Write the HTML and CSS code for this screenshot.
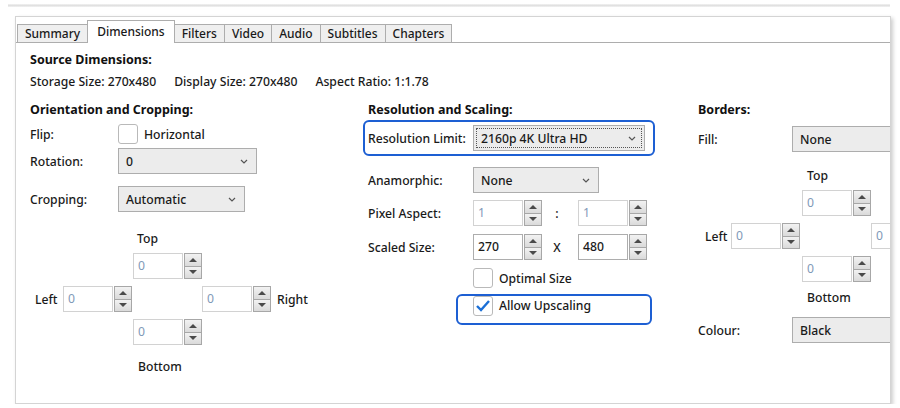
FILE: index.html
```html
<!DOCTYPE html>
<html lang="en">
<head>
    <meta charset="UTF-8">
    <title>Dimensions</title>
    <link rel="stylesheet" href="styles.css">
</head>
<body>
    <div class="topline"></div>

    <div class="window">
        <div class="tabs">
            <div class="tab">Summary</div>
            <div class="tab active">Dimensions</div>
            <div class="tab">Filters</div>
            <div class="tab">Video</div>
            <div class="tab">Audio</div>
            <div class="tab">Subtitles</div>
            <div class="tab">Chapters</div>
        </div>

        <div class="page">
            <h2>Source Dimensions:</h2>
            <div class="source-info">
                <span>Storage Size: 270x480</span>
                <span>Display Size: 270x480</span>
                <span>Aspect Ratio: 1:1.78</span>
            </div>

            <div class="columns">
                <!-- Orientation and Cropping -->
                <section class="col col-orient">
                    <h2>Orientation and Cropping:</h2>
                    <div class="row row-flip">
                        <label>Flip:</label>
                        <span class="check"></span>
                        <span class="check-text">Horizontal</span>
                    </div>
                    <div class="row row-rotation">
                        <label>Rotation:</label>
                        <div class="select sel-rotation">0<svg width="8" height="5" viewBox="0 0 8 5"><polyline points="1,1 4,4 7,1"/></svg></div>
                    </div>
                    <div class="row row-cropping">
                        <label>Cropping:</label>
                        <div class="select sel-cropping">Automatic<svg width="8" height="5" viewBox="0 0 8 5"><polyline points="1,1 4,4 7,1"/></svg></div>
                    </div>

                    <div class="crop">
                        <span class="crop-label c-top">Top</span>
                        <div class="spin c-topspin"><span class="spin-val">0</span><span class="spin-btns"><i class="up"></i><i class="down"></i></span></div>
                        <span class="crop-side c-left">Left</span>
                        <div class="spin c-leftspin"><span class="spin-val">0</span><span class="spin-btns"><i class="up"></i><i class="down"></i></span></div>
                        <div class="c-right">
                            <div class="spin"><span class="spin-val">0</span><span class="spin-btns"><i class="up"></i><i class="down"></i></span></div>
                            <span class="crop-side">Right</span>
                        </div>
                        <div class="spin c-bottomspin"><span class="spin-val">0</span><span class="spin-btns"><i class="up"></i><i class="down"></i></span></div>
                        <span class="crop-label c-bottom">Bottom</span>
                    </div>
                </section>

                <!-- Resolution and Scaling -->
                <section class="col col-scale">
                    <h2>Resolution and Scaling:</h2>
                    <div class="callout callout-limit">
                        <label>Resolution Limit:</label>
                        <div class="select sel-limit"><span class="focus">2160p 4K Ultra HD<svg width="8" height="5" viewBox="0 0 8 5"><polyline points="1,1 4,4 7,1"/></svg></span></div>
                    </div>
                    <div class="row row-anamorphic">
                        <label>Anamorphic:</label>
                        <div class="select sel-anamorphic">None<svg width="8" height="5" viewBox="0 0 8 5"><polyline points="1,1 4,4 7,1"/></svg></div>
                    </div>
                    <div class="row row-pixel">
                        <label>Pixel Aspect:</label>
                        <div class="spin"><span class="spin-val">1</span><span class="spin-btns"><i class="up"></i><i class="down"></i></span></div>
                        <span class="sep">:</span>
                        <div class="spin"><span class="spin-val">1</span><span class="spin-btns"><i class="up"></i><i class="down"></i></span></div>
                    </div>
                    <div class="row row-scaled">
                        <label>Scaled Size:</label>
                        <div class="spin spin-active"><span class="spin-val">270</span><span class="spin-btns"><i class="up"></i><i class="down"></i></span></div>
                        <span class="sep">X</span>
                        <div class="spin spin-active"><span class="spin-val">480</span><span class="spin-btns"><i class="up"></i><i class="down"></i></span></div>
                    </div>
                    <div class="row row-optimal">
                        <span class="check"></span>
                        <span class="check-text">Optimal Size</span>
                    </div>
                    <div class="callout callout-upscale">
                        <span class="check checked"><svg width="16" height="14" viewBox="0 0 16 14"><polyline points="2,7 6,11 14,2"/></svg></span>
                        <span class="check-text">Allow Upscaling</span>
                    </div>
                </section>

                <!-- Borders -->
                <section class="col col-borders">
                    <h2>Borders:</h2>
                    <div class="row row-fill">
                        <label>Fill:</label>
                        <div class="select sel-wide">None</div>
                    </div>

                    <div class="crop crop-borders">
                        <span class="crop-label c-top">Top</span>
                        <div class="spin c-topspin"><span class="spin-val">0</span><span class="spin-btns"><i class="up"></i><i class="down"></i></span></div>
                        <span class="crop-side c-left">Left</span>
                        <div class="spin c-leftspin"><span class="spin-val">0</span><span class="spin-btns"><i class="up"></i><i class="down"></i></span></div>
                        <div class="c-right">
                            <div class="spin"><span class="spin-val">0</span><span class="spin-btns"><i class="up"></i><i class="down"></i></span></div>
                        </div>
                        <div class="spin c-bottomspin"><span class="spin-val">0</span><span class="spin-btns"><i class="up"></i><i class="down"></i></span></div>
                        <span class="crop-label c-bottom">Bottom</span>
                    </div>

                    <div class="row row-colour">
                        <label>Colour:</label>
                        <div class="select sel-wide">Black</div>
                    </div>
                </section>
            </div>
        </div>
    </div>
</body>
</html>
```

FILE: styles.css
```css
body {
    margin: 0;
    background-color: #fff;
    font-family: "Noto Sans", "Open Sans", sans-serif;
    font-size: 12.2px;
    font-weight: 500;
    color: #1a1a1a;
}

.topline {
    height: 3px;
    margin: 4px 10px 0 8px;
    background: linear-gradient(to bottom, #f2f2f2, #e1e1e1, #f2f2f2);
}

.window {
    margin: 9px 9px 0 15px;
    height: 386px;
    border: 1px solid #d4d4d4;
    box-shadow: 2px 2px 4px rgba(0, 0, 0, 0.2);
    overflow: hidden;
    background-color: #fff;
}

/* tabs */

.tabs {
    display: flex;
    align-items: flex-end;
    padding: 3px 0 0 1px;
    border-bottom: 1px solid #adadad;
    font-size: 12px;
}

.tab {
    height: 17px;
    line-height: 17px;
    padding: 0 7px;
    margin-right: -1px;
    border: 1px solid #adadad;
    border-bottom: none;
    background-color: #efefef;
}

.tab.active {
    height: 22px;
    line-height: 21px;
    padding: 0 9px;
    margin-bottom: -1px;
    background-color: #fff;
}

/* page */

.page {
    padding: 9px 0 0 14px;
}

h2 {
    margin: 0;
    font-size: 12.5px;
    line-height: 16px;
    font-weight: bold;
    color: #111;
}

.source-info {
    display: flex;
    gap: 18px;
    margin-top: 6px;
    line-height: 16px;
}

.columns {
    display: grid;
    grid-template-columns: 338px 330px 1fr;
    margin-top: 12px;
}

.row {
    display: flex;
    align-items: center;
}

.row label,
.callout label {
    flex: none;
}

.col-orient .row label { width: 88px; }
.col-scale label { width: 105px; }
.col-borders .row label { width: 94px; }

.row-flip { margin-top: 6px; }
.row-rotation { margin-top: 4px; }
.row-cropping { margin-top: 12px; }

/* controls */

.select {
    display: flex;
    align-items: center;
    justify-content: space-between;
    box-sizing: border-box;
    height: 26px;
    padding: 0 8px 0 7px;
    border: 1px solid #adadad;
    background-color: #ececec;
}

.select svg {
    flex: none;
    fill: none;
    stroke: #555;
    stroke-width: 1.2;
}

.sel-rotation { width: 139px; }
.sel-cropping { width: 127px; }
.sel-anamorphic { width: 126px; }
.sel-wide { width: 140px; }

.sel-limit {
    width: 172px;
    padding: 2px;
}

.focus {
    flex: 1;
    display: flex;
    align-items: center;
    justify-content: space-between;
    height: 100%;
    box-sizing: border-box;
    padding: 0 5px 0 4px;
    border: 1px dotted #555;
}

.check {
    flex: none;
    display: flex;
    align-items: center;
    justify-content: center;
    box-sizing: border-box;
    width: 20px;
    height: 20px;
    border: 1px solid #b9b9b9;
    border-radius: 3px;
    background-color: #fff;
}

.check svg {
    fill: none;
    stroke: #1b6fd6;
    stroke-width: 2.4;
}

.check-text {
    margin-left: 6px;
}

.spin {
    display: flex;
    flex: none;
    height: 26px;
}

.spin-val {
    box-sizing: border-box;
    width: 50px;
    height: 26px;
    line-height: 24px;
    padding-left: 4px;
    border: 1px solid #d2d2d2;
    color: #7f99b8;
    font-weight: normal;
}

.spin-active .spin-val {
    border-color: #adadad;
    color: #1a1a1a;
    font-weight: 500;
}

.spin-btns {
    display: flex;
    flex-direction: column;
    width: 18px;
    margin-left: 1px;
}

.spin-btns i {
    flex: 1;
    display: flex;
    align-items: center;
    justify-content: center;
    border: 1px solid #a7a7a7;
    background: linear-gradient(to bottom, #f2f2f2, #dadada);
}

.spin-btns i + i {
    border-top: none;
}

.spin-btns .up::before {
    content: "";
    border-left: 4px solid transparent;
    border-right: 4px solid transparent;
    border-bottom: 4px solid #4a4a4a;
}

.spin-btns .down::before {
    content: "";
    border-left: 4px solid transparent;
    border-right: 4px solid transparent;
    border-top: 4px solid #4a4a4a;
}

.sep {
    width: 30px;
    padding-right: 6px;
    text-align: center;
}

/* resolution and scaling */

.callout {
    display: flex;
    align-items: center;
    border: 2px solid #1d5fd3;
    border-radius: 6px;
}

.callout-limit {
    width: 292px;
    box-sizing: border-box;
    margin: 2px 0 0 -5px;
    padding: 3px 0 3px 3px;
}

.row-anamorphic { margin-top: 11px; }
.row-pixel { margin-top: 7px; }
.row-scaled { margin-top: 8px; }

.row-optimal {
    margin: 8px 0 0 105px;
}

.callout-upscale {
    width: 196px;
    box-sizing: border-box;
    align-items: flex-start;
    margin: 6px 0 0 88px;
    padding: 0 0 7px 15px;
}

.callout-upscale .check-text {
    line-height: 20px;
}

/* crop / border grids */

.crop {
    display: grid;
    grid-template-columns: 28px 70px 69px auto;
    grid-template-rows: 16px 26px 26px 26px 16px;
    row-gap: 7px;
    align-items: center;
    margin: 18px 0 0 5px;
}

.crop-label {
    padding-left: 4px;
}

.c-top { grid-column: 3; grid-row: 1; }
.c-topspin { grid-column: 3; grid-row: 2; }
.c-left { grid-column: 1; grid-row: 3; }
.c-leftspin { grid-column: 2; grid-row: 3; }
.c-right {
    grid-column: 4;
    grid-row: 3;
    display: flex;
    align-items: center;
    gap: 6px;
}
.c-bottomspin { grid-column: 3; grid-row: 4; }
.c-bottom { grid-column: 3; grid-row: 5; margin-top: 12px; padding-left: 5px; }

.crop-borders {
    grid-template-columns: 26px 71px 69px auto;
    grid-template-rows: 16px 26px 26px 26px 16px;
    margin: 15px 0 0 7px;
}

.crop-borders .c-top { padding-left: 5px; }
.crop-borders .c-bottom { margin-top: 0; }

.row-fill { margin-top: 8px; }
.row-colour { margin-top: 12px; }
```
